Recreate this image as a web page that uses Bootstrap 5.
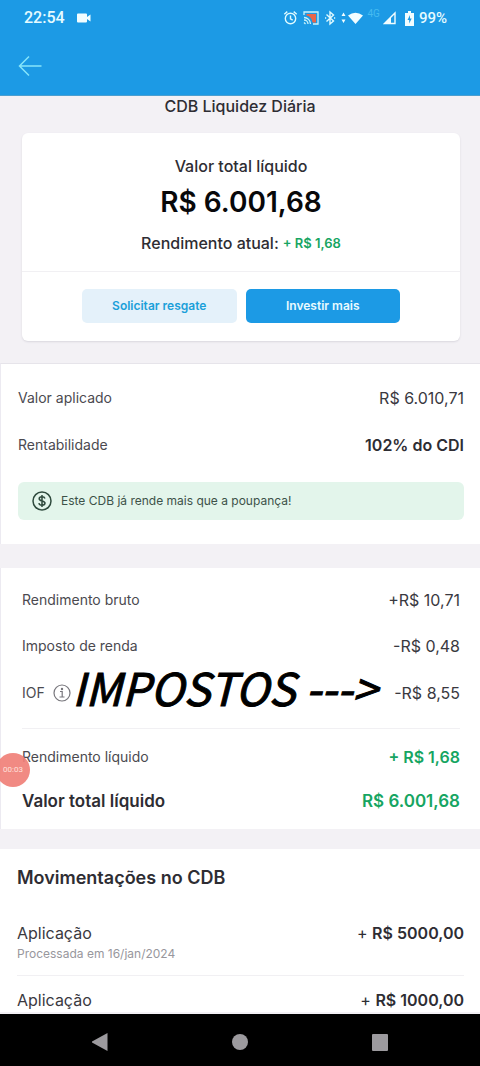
<!DOCTYPE html>
<html lang="pt-BR">
<head>
<meta charset="utf-8">
<meta name="viewport" content="width=device-width, initial-scale=1">
<title>CDB Liquidez Diária</title>
<link href="https://cdn.jsdelivr.net/npm/bootstrap@5.3.0/dist/css/bootstrap.min.css" rel="stylesheet">
<style>
  :root { --blue: #1c9ae5; --ink: #2e2d33; --soft: #4b4a50; --green: #16a562; --line: #f1f0f3; }
  body { font-family: Inter, "Liberation Sans", sans-serif; color: var(--ink); background: #f3f1f5; font-size: 16px; line-height: 24px; }
  .app-shell { height: 100vh; }
  .medium { font-weight: 500; }
  .semi { font-weight: 600; }

  /* Status bar and title bar */
  .app-top { background: var(--blue); color: #e6fbff; border-bottom: 1px solid #4b9fd0; }
  .status-bar { font-family: Roboto, sans-serif; font-size: 15px; font-weight: 500; height: 36px; padding: 0 33px 0 24px; gap: 12px; }
  .clock { font-size: 16px; }
  .status-icons { gap: 5px; }
  .status-4g { font-size: 10px; line-height: 12px; color: #45bbf0; font-weight: 400; margin: 0 -2px 8px; }
  .title-bar { height: 59px; padding: 0 16px; }
  .back-btn { width: 28px; height: 28px; }

  /* Scrolling content */
  .app-scroll { min-height: 0; overflow-y: auto; scrollbar-width: none; }
  .page-title { font-size: 16px; line-height: 20px; font-weight: 500; padding-bottom: 17px; margin: 0; }
  .total-card { margin: 0 20px 22px 22px; border-radius: 6px; background: #fff; box-shadow: 0 1px 2px #d9d7de; }
  .total-body { padding: 21px 8px 16px; }
  .total-value { font-size: 28px; line-height: 36px; font-weight: 600; color: #08080a; margin: 6px 0 11px; }
  .total-actions { border-top: 1px solid var(--line); padding: 17px 60px 18px; gap: 9px; }
  .act-btn { flex: 1 1 0; height: 34px; border: 0; border-radius: 5px; font-size: 12px; line-height: 20px; font-weight: 600; padding: 0; }
  .act-soft, .act-soft:hover { background: #e4f1fa; color: #1ba0d9; }
  .act-main, .act-main:hover { background: var(--blue); color: #e9faff; }

  .panel { background: #fff; border-left: 1px solid #eceaf1; }
  .panel-a { padding: 22px 16px 24px 17px; margin-bottom: 24px; border-top: 1px solid #e6e4ea; }
  .panel-b { padding: 20px 20px 16px 21px; margin-bottom: 20px; }
  .panel-c { padding: 17px 16px 0 17px; border: 0; }
  .lbl { font-size: 14px; color: var(--soft); }
  .num { color: #3a393f; }
  .up { color: var(--green); font-weight: 600; }
  .up-small { font-size: 13px; }
  .sum { font-size: 17px; }
  .row-gap-a { margin-bottom: 23px; }
  .row-gap-b { margin-bottom: 22px; }
  .tip { background: #e3f5eb; color: #3d5249; border-radius: 6px; padding: 7px 14px; font-size: 12px; margin: 25px 0 0; gap: 9px; }
  .rule { border-top: 1px solid var(--line); }
  .note { font-family: "Noto Sans CJK SC", sans-serif; font-style: italic; font-size: 45px; line-height: 48px; color: #000; -webkit-text-stroke: 1px #000; left: 50px; top: -18px; white-space: nowrap; }
  .rec-dot { left: -26px; top: 8px; width: 34px; height: 34px; background: rgba(240, 128, 120, .92); color: #ffe0dc; font-family: Roboto, sans-serif; font-size: 8px; line-height: 10px; }
  .section-title { font-size: 18px; line-height: 24px; font-weight: 600; margin: 0 0 31px; }
  .sub { font-size: 12px; line-height: 18px; color: #98979d; padding-bottom: 12px; }

  .sys-nav { background: #000; height: 52px; padding: 0 31px 0 30px; }
  .sys-nav .btn { width: 139px; height: 52px; }
</style>
</head>
<body>
<div class="app-shell d-flex flex-column overflow-hidden">
  <header class="app-top flex-shrink-0">
    <div class="status-bar d-flex align-items-center">
      <span class="clock">22:54</span>
      <svg width="14" height="10" viewBox="0 0 14 10" fill="#f2fdff"><path d="M1 .5h8q1 0 1 1V4l3.500-2.500v7L10 6v2.500q0 1-1 1H1q-1 0-1-1v-7q0-1 1-1z"/></svg>
      <div class="status-icons d-flex align-items-center ms-auto">
        <svg width="15" height="16" viewBox="0 0 14 16" fill="none" stroke="#dffaff" stroke-width="1.400"><circle cx="7" cy="8.500" r="5.200"/><path d="M7 5.500v3.300l2.200 1.400M.8 4.200 3.800 1.600M13.200 4.200 10.200 1.600"/></svg>
        <svg width="16" height="14" viewBox="0 0 16 14" fill="none" stroke="#c9f3fc" stroke-width="1.300"><path d="M3.500 3h9.500v8.500H9.500C9 7.500 7 5 3.500 4.500z" fill="#e8654a" stroke="none"/><path d="M1 4V1h14v12h-5M1 6.500A6.500 6.500 0 0 1 7.500 13M1 9a4 4 0 0 1 4 4M1 11.500 2.500 13"/></svg>
        <svg width="12" height="16" viewBox="0 0 12 16" fill="none" stroke="#dffaff" stroke-width="1.400"><path d="m2.500 4.500 7 6.500L6 14V2l3.500 3-7 6.500M1 8h1.200M10 8h1.200"/></svg>
        <svg width="23" height="14" viewBox="0 0 23 14" fill="#f2fdff"><path d="M2.500 1.500 4.500 5h-4zM2.500 12 4.500 8.500h-4zM7 4.500Q14.500-1 22 4.500L14.500 13z"/></svg>
        <span class="status-4g">4G</span>
        <svg width="13" height="14" viewBox="0 0 13 14" fill="none" stroke="#f2fdff" stroke-width="1.400"><path d="M1.500 12.500 12 2v10.500z"/><path d="M1 13 8 6v7z" fill="#f2fdff" stroke="none"/></svg>
        <svg class="ms-1" width="9" height="15" viewBox="0 0 9 15"><path d="M3 0h3v2h3v13H0V2h3z" fill="#f2fdff"/><path d="M5 4 2.500 9h1.700v3.500L6.700 7.500H5z" fill="#1c9ae5"/></svg>
        <span>99%</span>
      </div>
    </div>
    <div class="title-bar d-flex align-items-center">
      <button type="button" class="back-btn btn p-0 border-0 d-flex align-items-center justify-content-center" aria-label="Voltar">
        <svg width="24" height="22" viewBox="0 0 24 22" fill="none" stroke="#86e5fa" stroke-width="1.500"><path d="M23.500 11H1.500M11 1.500 1.500 11 11 20.500"/></svg>
      </button>
    </div>
  </header>

  <main class="app-scroll flex-grow-1">
    <h1 class="page-title text-center">CDB Liquidez Diária</h1>

    <section class="total-card">
      <div class="total-body text-center">
        <div class="medium">Valor total líquido</div>
        <div class="total-value">R$ 6.001,68</div>
        <div class="d-flex justify-content-center align-items-center gap-1"><span class="medium">Rendimento atual:</span><span class="up up-small">+ R$ 1,68</span></div>
      </div>
      <div class="total-actions d-flex">
        <button type="button" class="btn act-btn act-soft">Solicitar resgate</button>
        <button type="button" class="btn act-btn act-main">Investir mais</button>
      </div>
    </section>

    <section class="panel panel-a">
      <div class="d-flex justify-content-between row-gap-a"><span class="lbl">Valor aplicado</span><span class="num">R$ 6.010,71</span></div>
      <div class="d-flex justify-content-between"><span class="lbl">Rentabilidade</span><span class="semi">102% do CDI</span></div>
      <p class="tip d-flex align-items-center">
        <svg width="20" height="20" viewBox="0 0 20 20" fill="none" stroke="#2f4a3d" stroke-width="1.500"><circle cx="10" cy="10" r="9"/><path d="M13 7.500C12.500 6 11.500 5.700 10 5.700c-1.800 0-2.800.8-2.800 2 0 3 5.800 1.400 5.800 4.400 0 1.300-1.200 2.200-3 2.200-1.600 0-2.800-.7-3.100-2.100M10 4v12"/></svg>
        <span>Este CDB já rende mais que a poupança!</span>
      </p>
    </section>

    <section class="panel panel-b">
      <div class="d-flex justify-content-between row-gap-b"><span class="lbl">Rendimento bruto</span><span class="num">+R$ 10,71</span></div>
      <div class="d-flex justify-content-between row-gap-a"><span class="lbl">Imposto de renda</span><span class="num">-R$ 0,48</span></div>
      <div class="d-flex justify-content-between position-relative row-gap-a">
        <span class="lbl d-flex align-items-center gap-2">IOF
          <svg width="18" height="18" viewBox="0 0 18 18" fill="none" stroke="#77767c" stroke-width="1.200"><circle cx="9" cy="9" r="8"/><path d="M7 7.500h2.200V13M6.500 13h5"/><circle cx="9" cy="5" r=".6" fill="#77767c"/></svg>
        </span>
        <span class="num">-R$ 8,55</span>
        <span class="note position-absolute">IMPOSTOS ---&gt;</span>
      </div>
      <div class="rule pb-3"></div>
      <div class="d-flex justify-content-between position-relative mb-3 pb-1">
        <span class="lbl">Rendimento líquido</span><span class="up">+ R$ 1,68</span>
        <span class="rec-dot position-absolute rounded-circle d-flex align-items-center justify-content-center">00:03</span>
      </div>
      <div class="sum d-flex justify-content-between"><span class="semi">Valor total líquido</span><span class="up">R$ 6.001,68</span></div>
    </section>

    <section class="panel panel-c">
      <h2 class="section-title">Movimentações no CDB</h2>
      <div class="d-flex justify-content-between"><span class="num">Aplicação</span><span>+ <span class="semi">R$ 5000,00</span></span></div>
      <div class="sub">Processada em 16/jan/2024</div>
      <div class="rule pb-2"></div>
      <div class="d-flex justify-content-between pt-1"><span class="num">Aplicação</span><span>+ <span class="semi">R$ 1000,00</span></span></div>
    </section>
  </main>

  <nav class="sys-nav d-flex justify-content-between align-items-center flex-shrink-0" aria-label="Sistema">
    <button type="button" class="btn border-0 p-0" aria-label="Voltar"><svg width="18" height="18" viewBox="0 0 18 18" fill="#9c9a9e"><path d="M16.500 0v18L1 9.500V8.500z"/></svg></button>
    <button type="button" class="btn border-0 p-0" aria-label="Início"><svg width="18" height="18" viewBox="0 0 18 18" fill="#9c9a9e"><circle cx="9" cy="9" r="8"/></svg></button>
    <button type="button" class="btn border-0 p-0" aria-label="Recentes"><svg width="18" height="18" viewBox="0 0 18 18" fill="#9c9a9e"><rect x="1" y="1" width="16" height="17" rx="1"/></svg></button>
  </nav>
</div>
<script src="https://cdn.jsdelivr.net/npm/bootstrap@5.3.0/dist/js/bootstrap.bundle.min.js"></script>
</body>
</html>
